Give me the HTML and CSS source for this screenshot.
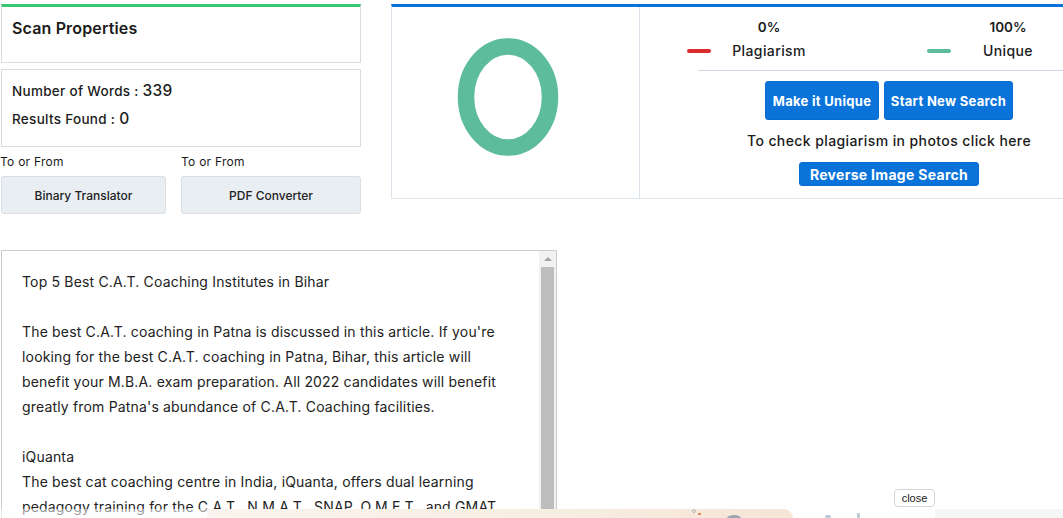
FILE: index.html
```html
<!DOCTYPE html>
<html>
<head>
<meta charset="utf-8">
<link rel="stylesheet" href="styles.css">
</head>
<body>
<div class="page">
  <div class="top-row">
    <div class="left-col">
      <div class="card card-title">
        <h2 class="title">Scan Properties</h2>
      </div>
      <div class="card card-stats">
        <p class="stat-line">Number of Words : <span class="num">339</span></p>
        <p class="stat-line">Results Found : <span class="num">0</span></p>
      </div>
      <div class="tools">
        <div class="tool">
          <div class="tool-label">To or From</div>
          <button class="tool-btn">Binary Translator</button>
        </div>
        <div class="tool">
          <div class="tool-label">To or From</div>
          <button class="tool-btn">PDF Converter</button>
        </div>
      </div>
    </div>
    <div class="result-card">
      <div class="chart-panel">
        <svg class="ring" width="120" height="130" viewBox="0 0 120 130">
          <ellipse cx="60" cy="64" rx="42" ry="50.5" fill="none" stroke="#5cbc9c" stroke-width="16.5"/>
        </svg>
      </div>
      <div class="info-panel">
        <div class="legend">
          <div class="legend-item first">
            <span class="swatch red"></span>
            <div class="legend-text">
              <div class="pct">0%</div>
              <div class="lbl">Plagiarism</div>
            </div>
          </div>
          <div class="legend-item second">
            <span class="swatch green"></span>
            <div class="legend-text">
              <div class="pct">100%</div>
              <div class="lbl">Unique</div>
            </div>
          </div>
        </div>
        <div class="rule"></div>
        <div class="actions">
          <button class="blue-btn big">Make it Unique</button>
          <button class="blue-btn big">Start New Search</button>
        </div>
        <p class="photo-note">To check plagiarism in photos click here</p>
        <button class="blue-btn small">Reverse Image Search</button>
      </div>
    </div>
  </div>

  <div class="text-box">
    <div class="text-content">
      <p>Top 5 Best C.A.T. Coaching Institutes in Bihar</p>
      <p class="blank">&nbsp;</p>
      <p>The best C.A.T. coaching in Patna is discussed in this article. If you're<br>looking for the best C.A.T. coaching in Patna, Bihar, this article will<br>benefit your M.B.A. exam preparation. All 2022 candidates will benefit<br>greatly from Patna's abundance of C.A.T. Coaching facilities.</p>
      <p class="blank">&nbsp;</p>
      <p>iQuanta</p>
      <p>The best cat coaching centre in India, iQuanta, offers dual learning<br>pedagogy training for the C.A.T., N.M.A.T., SNAP, O.M.E.T., and GMAT.</p>
    </div>
    <div class="scrollbar">
      <div class="scroll-up"></div>
      <div class="scroll-thumb"></div>
    </div>
  </div>
</div>

<button class="close-btn">close</button>
<div class="ad-strip">
  <div class="ad-fade"></div>
  <div class="ad-banner">
    <span class="ad-dot d1"></span>
    <span class="ad-dot d2"></span>
    <span class="ad-arc"></span>
  </div>
  <div class="ad-gap">
    <span class="ad-dot d3"></span>
    <span class="ad-dot d4"></span>
  </div>
  <div class="ad-gray"></div>
</div>
</body>
</html>
```
FILE: styles.css
```css
html, body {
  margin: 0;
  padding: 0;
  overflow: hidden;
  background: #fff;
}
body {
  font-family: "Inter", "Open Sans", sans-serif;
  color: #1b1b1b;
  width: 1063px;
  height: 518px;
  position: relative;
}
.page {
  padding-top: 4px;
}
.top-row {
  display: flex;
  align-items: flex-start;
  gap: 30px;
}
.left-col {
  width: 361px;
  flex: none;
}
.card {
  margin-left: 1px;
  border: 1px solid #dcdcdc;
  box-sizing: border-box;
  width: 360px;
}
.card-title {
  border-top: 3px solid #37c873;
  height: 59px;
  padding: 11px 10px;
}
.title {
  margin: 0;
  font-size: 16px;
  font-weight: 600;
  letter-spacing: 0.15px;
  color: #1b1b1b;
}
.card-stats {
  margin-top: 6px;
  height: 78px;
  padding: 11px 10px;
}
.stat-line {
  margin: 0;
  font-size: 13.5px;
  font-weight: 500;
  letter-spacing: 0.3px;
  height: 28px;
  line-height: 20px;
}
.num {
  font-size: 15.5px;
}
.tools {
  display: flex;
  gap: 15px;
  margin-top: 7px;
}
.tool {
  width: 166px;
}
.tool:last-child {
  width: 180px;
}
.tool-label {
  font-size: 12px;
  letter-spacing: 0.25px;
  height: 22px;
  line-height: 16px;
}
.tool-btn {
  margin-left: 1px;
  width: 100%;
  height: 38px;
  border: 1px solid #d8dee4;
  border-radius: 3px;
  background: #e9eef3;
  font-family: inherit;
  font-size: 12px;
  font-weight: 500;
  color: #222;
}
.tool:first-child .tool-btn {
  width: 165px;
}
.tool:last-child .tool-btn {
  margin-left: 0;
}
.result-card {
  display: flex;
  flex: none;
  width: 748px;
  height: 195px;
  box-sizing: border-box;
  border-top: 3px solid #0a73da;
  border-left: 1px solid #dde3ea;
  border-bottom: 1px solid #dde3ea;
}
.chart-panel {
  width: 248px;
  flex: none;
  border-right: 1px solid #dde3ea;
  display: flex;
  justify-content: center;
  padding-top: 26px;
  box-sizing: border-box;
}
.ring {
  display: block;
  margin-right: 16px;
}
.info-panel {
  width: 498px;
  flex: none;
  display: flex;
  flex-direction: column;
  align-items: center;
}
.legend {
  align-self: flex-start;
  display: flex;
  padding-left: 47px;
  padding-top: 8px;
  height: 54px;
  box-sizing: border-box;
}
.legend-item {
  display: flex;
  align-items: flex-end;
}
.legend-item.second {
  margin-left: 118px;
}
.swatch {
  display: block;
  width: 24px;
  height: 4px;
  border-radius: 2px;
  margin-bottom: 8px;
}
.swatch.red { background: #dc2b2b; }
.swatch.green { background: #5cbc9c; }
.legend-text {
  width: 80px;
  margin-left: 18px;
  text-align: center;
}
.second .legend-text {
  margin-left: 17px;
}
.pct {
  font-size: 13.5px;
  font-weight: 600;
  line-height: 22px;
  margin-bottom: 3px;
}
.lbl {
  font-size: 14px;
  font-weight: 500;
  letter-spacing: 0.4px;
  line-height: 20px;
}
.rule {
  align-self: flex-start;
  margin-left: 58px;
  width: 440px;
  height: 1px;
  background: #cfd8e2;
  margin-top: 9px;
}
.actions {
  display: flex;
  gap: 5px;
  margin-top: 10px;
}
.blue-btn {
  background: #0a73da;
  color: #fff;
  border: 1px solid #0a6cd0;
  border-radius: 3px;
  font-family: inherit;
  font-weight: 700;
  padding: 0;
  white-space: nowrap;
}
.blue-btn.big {
  height: 39px;
  font-size: 13px;
  letter-spacing: 0.3px;
}
.actions .blue-btn:first-child { width: 114px; }
.actions .blue-btn:last-child { width: 129px; }
.photo-note {
  margin: 12px 0 0;
  font-size: 14px;
  font-weight: 500;
  letter-spacing: 0.4px;
  line-height: 18px;
}
.blue-btn.small {
  margin-top: 12px;
  width: 180px;
  height: 24px;
  font-size: 14px;
  letter-spacing: 0.3px;
}
.text-box {
  margin-top: 36px;
  margin-left: 1px;
  width: 556px;
  height: 290px;
  box-sizing: border-box;
  border: 1px solid #cccccc;
  display: flex;
}
.text-content {
  flex: 1;
  overflow: hidden;
  padding: 18px 20px 0 20px;
  font-size: 14px;
  letter-spacing: 0.17px;
  line-height: 25px;
  color: #222;
  white-space: nowrap;
}
.text-content p {
  margin: 0;
}
.scrollbar {
  width: 17px;
  flex: none;
  background: #f1f1f1;
  display: flex;
  flex-direction: column;
  align-items: center;
}
.scroll-up {
  width: 0;
  height: 0;
  margin-top: 6px;
  border-left: 4px solid transparent;
  border-right: 4px solid transparent;
  border-bottom: 4px solid #a3a3a3;
}
.scroll-thumb {
  margin-top: 6px;
  width: 13px;
  flex: 1;
  background: #bdbdbd;
}
.close-btn {
  position: absolute;
  left: 894px;
  top: 489px;
  width: 41px;
  height: 18px;
  padding: 0;
  border: 1px solid #d4d4d4;
  border-radius: 4px;
  background: #fff;
  font-family: "Liberation Sans", Arial, sans-serif;
  font-size: 11px;
  color: #222;
}
.ad-strip {
  position: absolute;
  left: 0;
  bottom: 0;
  width: 1063px;
  height: 9px;
  display: flex;
}
.ad-fade {
  width: 207px;
  background: rgba(255, 255, 255, 0.55);
}
.ad-banner {
  position: relative;
  width: 586px;
  background: linear-gradient(90deg, #fbf4ee 0%, #f7eee3 55%, #f5e6d6 100%);
  border-top-right-radius: 34px;
}
.ad-gap {
  position: relative;
  width: 142px;
}
.ad-gray {
  flex: 1;
  background: #f6f6f6;
}
.ad-dot {
  position: absolute;
  display: block;
  border-radius: 50%;
}
.d1 { left: 485px; top: 0; width: 4px; height: 4px; border: 1px solid #b7b7b7; box-sizing: border-box; }
.d2 { left: 491px; top: 4px; width: 3px; height: 2px; background: #e07a3a; border-radius: 1px; }
.ad-arc {
  position: absolute;
  left: 520px;
  top: 6px;
  width: 14px;
  height: 6px;
  border-radius: 50% 50% 0 0;
  background: #9aa7b0;
}
.d3 { left: 32px; top: 6px; width: 6px; height: 3px; background: #b8ccd8; border-radius: 2px; }
.d4 { left: 64px; top: 4px; width: 3px; height: 5px; background: #b8ccd8; border-radius: 1px; }
```
